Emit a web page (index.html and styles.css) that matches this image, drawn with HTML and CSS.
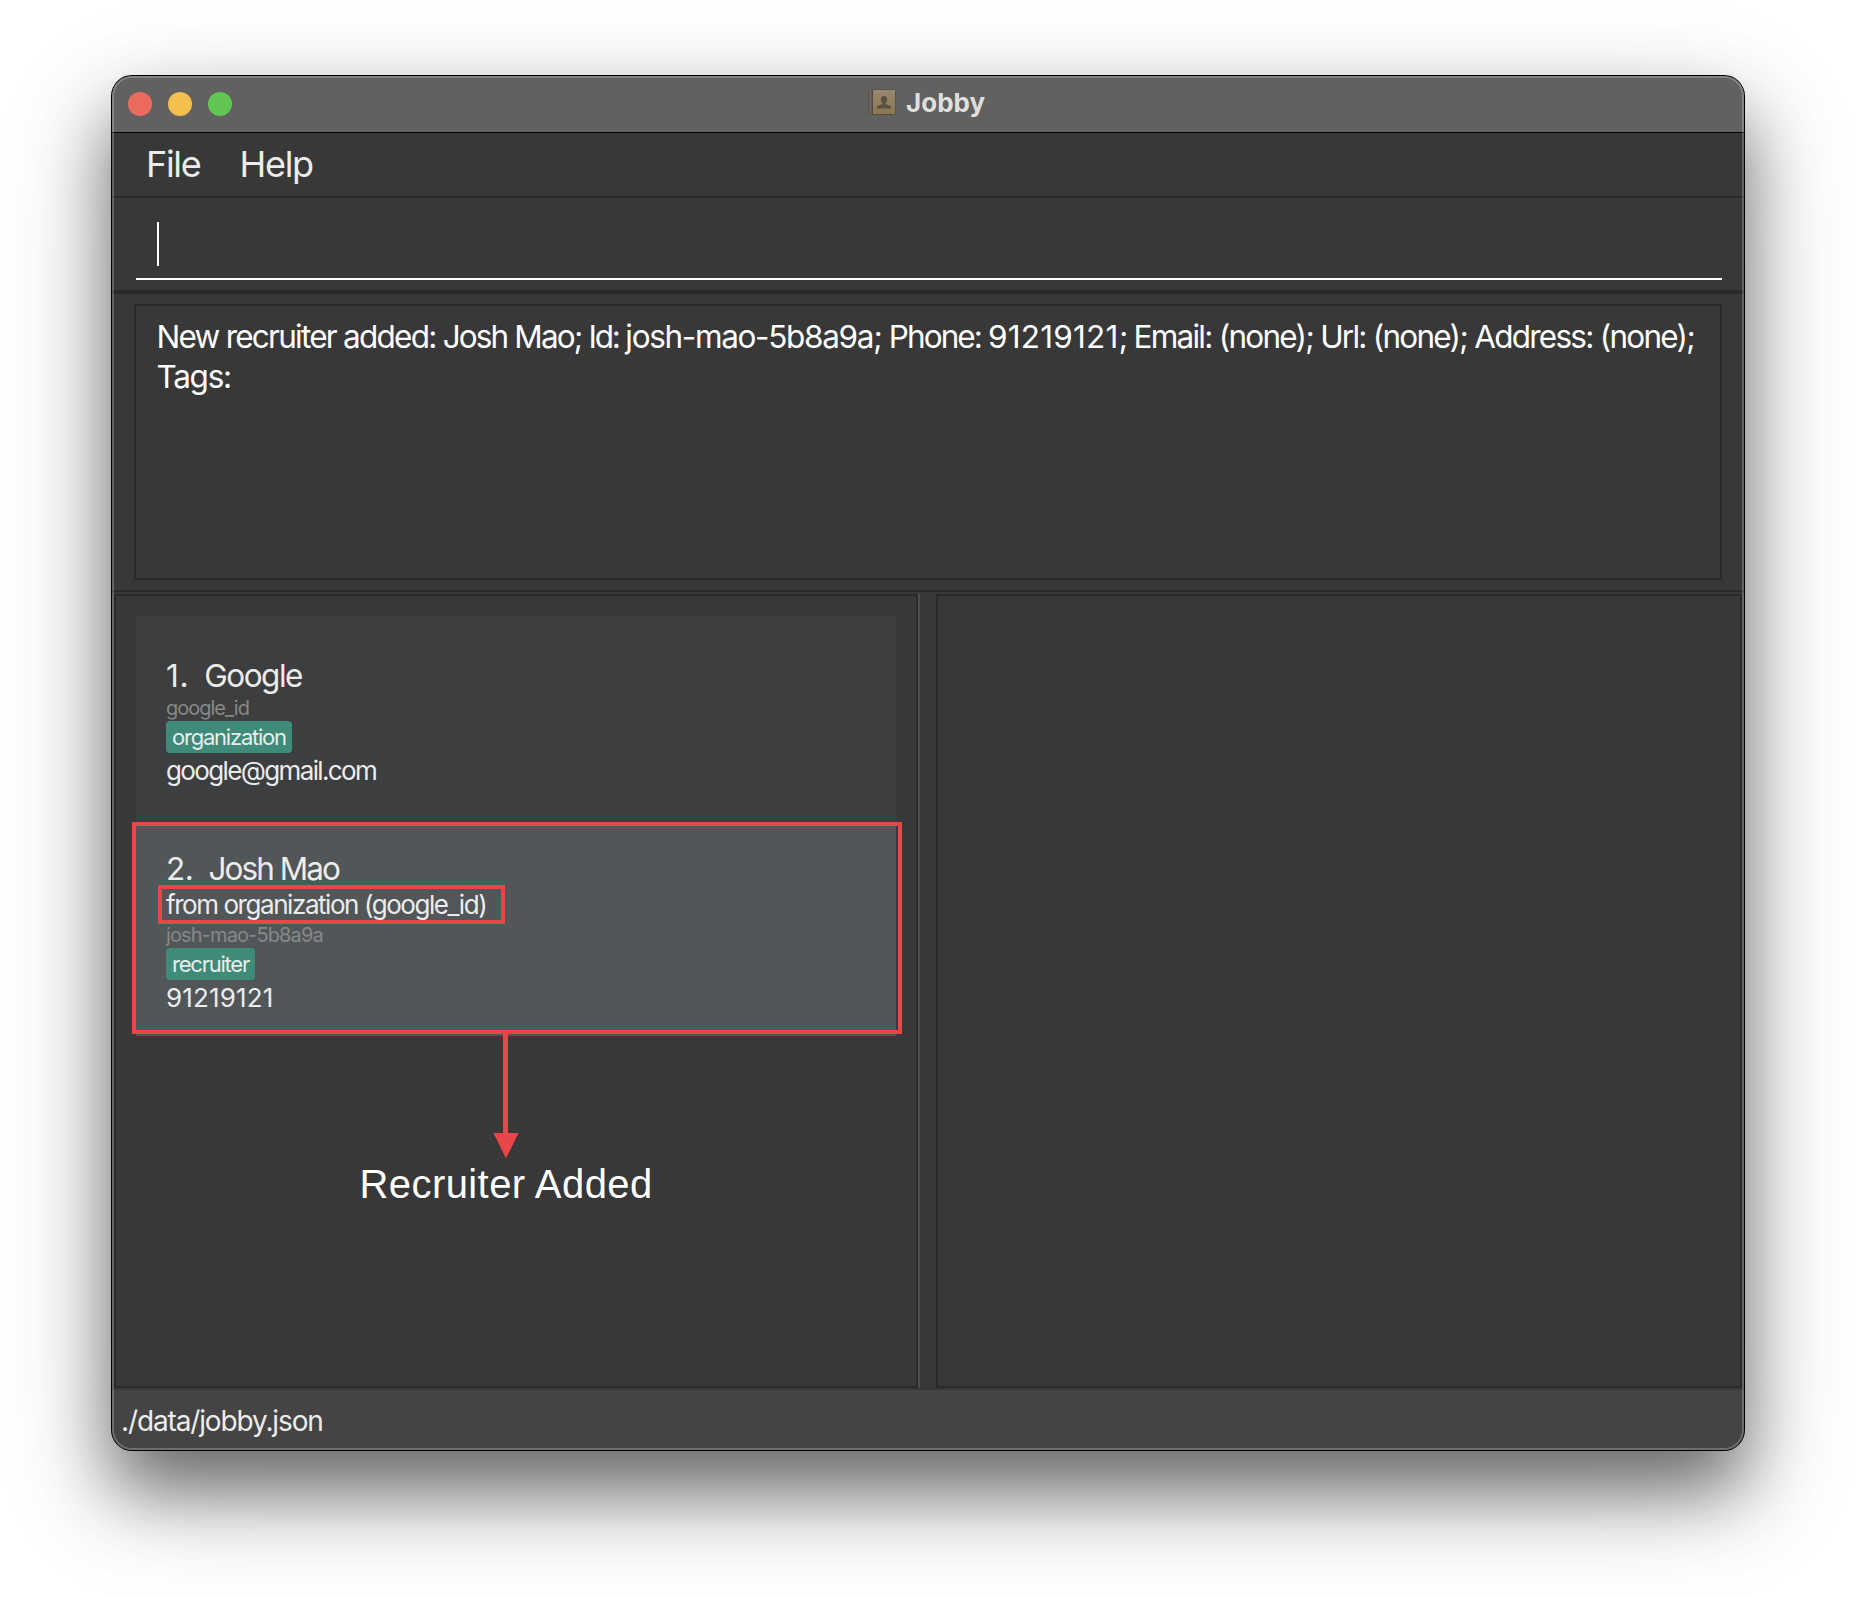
FILE: index.html
```html
<!DOCTYPE html>
<html lang="en">
<head>
<meta charset="utf-8">
<title>Jobby</title>
<link rel="stylesheet" href="styles.css">
</head>
<body>
<div class="window">
  <header class="titlebar">
    <div class="lights"><i class="light close"></i><i class="light minimize"></i><i class="light maximize"></i></div>
    <svg class="app-icon" viewBox="0 0 28 27" width="28" height="27">
      <defs><linearGradient id="cover" x1="0" y1="0" x2="0" y2="1"><stop offset="0" stop-color="#96876f"/><stop offset="1" stop-color="#8b7850"/></linearGradient></defs>
      <rect x="0.500" y="0.500" width="27" height="25.500" rx="1.500" fill="#4f4b47"/>
      <rect x="1.500" y="1" width="2" height="24.500" fill="#746b68"/>
      <rect x="5" y="1" width="22" height="24" fill="url(#cover)"/>
      <path d="M16 7c2.200 0 3.200 1.500 3.200 3.200 0 1.600-.8 2.500-1.500 3.400v1.600l4 1.400c1 .4 1.300 1 1.300 2.900H9c0-1.900.3-2.500 1.300-2.900l4-1.400v-1.600c-.7-.9-1.500-1.800-1.500-3.400C12.800 8.500 13.800 7 16 7z" fill="#5a5142"/>
    </svg>
    <span class="title">Jobby</span>
  </header>
  <nav class="menu"><span>File</span><span class="help">Help</span></nav>
  <div class="command"><div class="field"><i class="caret"></i></div></div>
  <div class="result"><div class="result-box">New recruiter added: <span class="value-name">Josh Mao; </span><span class="label-id">Id: </span><span class="value-id">josh-mao-5b8a9a; </span><span class="label-phone">Phone: </span><span class="value-phone">91219121</span>; Email: (none); Url: (none); Address: (none);<br><span class="label-tags">Tags:</span></div></div>
  <main class="split">
    <section class="pane list">
      <article class="card">
        <h2 class="name"><span class="num">1.</span><span>Google</span></h2>
        <p class="id">google_id</p>
        <p class="badge">organization</p>
        <p class="line email">google@gmail.com</p>
      </article>
      <article class="card selected">
        <h2 class="name"><span class="num">2.</span><span>Josh Mao</span></h2>
        <p class="line from">from organization (google_id)</p>
        <p class="id">josh-mao-5b8a9a</p>
        <p class="badge">recruiter</p>
        <p class="line phone">91219121</p>
      </article>
    </section>
    <div class="divider"></div>
    <section class="pane detail"></section>
  </main>
  <footer class="status">./data/jobby.json</footer>
</div>
<div class="mark mark-card"></div>
<div class="mark mark-from"></div>
<svg class="arrow" viewBox="0 0 26 126" width="26" height="126"><path d="M10 0h5v99h10.500L13 124.500.500 99H10z" fill="#e9464a"/></svg>
<div class="caption">Recruiter Added</div>
</body>
</html>
```

FILE: styles.css
```css
* { box-sizing: border-box; }
body { margin: 0; height: 1598px; overflow: hidden; padding: 76px 112px 0; background: #fff; font-family: Inter, "Liberation Sans", sans-serif; color: #ececec; position: relative; }
h2, p { margin: 0; font-weight: 400; }
.window { position: relative; width: 1632px; height: 1374px; border-radius: 20px; overflow: hidden; background: #383838; display: flex; flex-direction: column; box-shadow: 0 0 0 1px #000, 0 40px 72px rgba(0,0,0,.53), 0 40px 130px rgba(0,0,0,.16); }
.window::after { content: ""; position: absolute; inset: 0; border: 2px solid rgba(255,255,255,.22); border-radius: 20px; }
.titlebar { height: 57px; flex: none; background: #61615f; border-bottom: 1px solid #000; display: flex; align-items: flex-start; }
.lights { display: flex; gap: 16px; padding: 16px 0 0 16px; width: 756px; }
.light { width: 24px; height: 24px; border-radius: 50%; }
.close { background: #ed6a5e; }
.minimize { background: #f5bf4f; }
.maximize { background: #61c554; }
.app-icon { margin-top: 13px; }
.title { font-size: 26px; font-weight: 700; line-height: 32px; margin: 11px 0 0 10px; color: #dfdfdd; }
.menu { height: 65px; flex: none; border-bottom: 2px solid #2a2a2a; padding-left: 34px; font-size: 36px; line-height: 62px; letter-spacing: -1.3px; display: flex; }
.help { margin-left: 39px; }
.command { height: 96px; flex: none; border-bottom: 4px solid #2a2a2a; padding: 14px 22px 0 24px; }
.field { height: 68px; border-bottom: 2px solid #fff; padding: 10px 21px; }
.caret { display: block; width: 2px; height: 44px; background: #fff; }
.result { height: 298px; flex: none; padding: 10px 22px; border-bottom: 2px solid #2a2a2a; }
.result-box { height: 276px; border: 2px solid #2a2a2a; padding: 11px 20.5px; font-size: 31.5px; line-height: 40px; letter-spacing: -1.75px; color: #fff; white-space: nowrap; }
.value-name { letter-spacing: -1.86px; }
.label-id { letter-spacing: -2.2px; }
.value-id { letter-spacing: -1.33px; }
.label-phone { letter-spacing: -1.93px; }
.value-phone { letter-spacing: .25px; }
.label-tags { letter-spacing: -1.3px; }
.split { display: flex; height: 798px; flex: none; padding: 2px; }
.pane { border: 2px solid #2a2a2a; height: 794px; }
.list { width: 804px; padding: 20px; }
.divider { width: 18px; border-left: 2px solid #4d4d4d; }
.detail { width: 806px; }
.card { height: 210px; padding: 40px 30px 0; background: #3c3e3f; }
.selected { background: #515658; padding-top: 23px; }
.name { font-size: 31.5px; line-height: 40px; letter-spacing: -1.5px; display: flex; }
.num { margin-right: 15.200px; letter-spacing: .6px; }
.selected .name { letter-spacing: -1.95px; }
.selected .num { letter-spacing: -.5px; }
.id { font-size: 20px; line-height: 25px; letter-spacing: -1px; color: #888; }
.selected .id { height: 27px; line-height: 29px; letter-spacing: -.88px; }
.badge { width: fit-content; height: 32px; border-radius: 4px; background: #3e8b79; padding: 0 6px; font-size: 22px; line-height: 32px; letter-spacing: -1.22px; }
.line { font-size: 26px; line-height: 35px; }
.email { letter-spacing: -1.63px; }
.from { line-height: 32px; letter-spacing: -1.44px; }
.phone { letter-spacing: .15px; }
.status { flex: 1; background: #444; font-size: 28px; padding-left: 9px; line-height: 63px; letter-spacing: -1.13px; }
.mark { position: absolute; border: 4px solid #e9464a; }
.mark-card { left: 132px; top: 822px; width: 770px; height: 212px; }
.mark-from { left: 158px; top: 885px; width: 347px; height: 39px; }
.selected .from { line-height: 32px; }
.arrow { position: absolute; left: 493px; top: 1034px; }
.caption { position: absolute; left: 359.500px; top: 1161px; font: 40px/46px "Liberation Sans", Arial, sans-serif; letter-spacing: .42px; color: #fff; white-space: nowrap; }
```
